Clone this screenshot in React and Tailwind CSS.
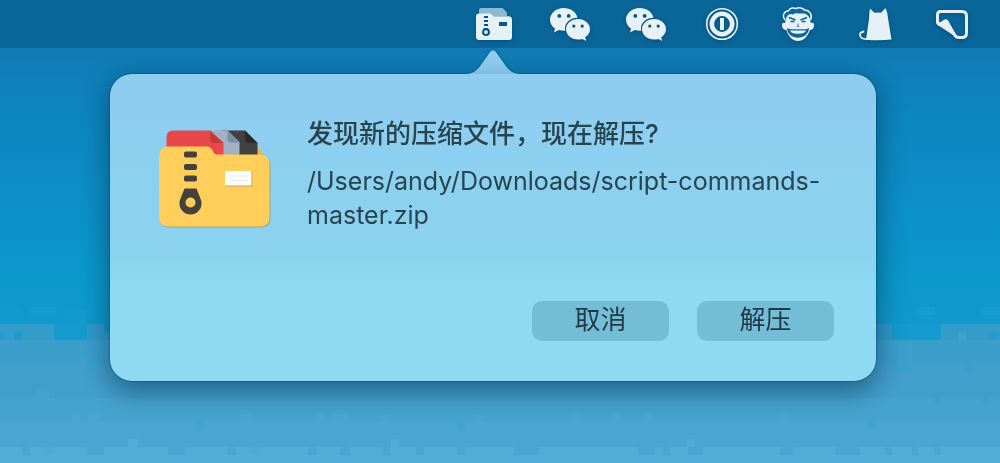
import React from "react";

// flat colour bands from the horizon down: y, height, colour
const BANDS = [
  [340, 25, "#3b9fcc"],
  [365, 33, "#429fcb"],
  [398, 24, "#46a3cd"],
  [422, 25, "#4aa6d1"],
  [447, 16, "#53acd5"],
];

const BLOCKS = [
  // horizon, left of the popover
  [0, 307, 20, 17, "#119acd"],
  [30, 307, 26, 8, "#159bce"],
  [64, 310, 22, 14, "#149bce"],
  [0, 324, 54, 16, "#349ccb"],
  [14, 332, 8, 8, "#1f9acd"],
  [0, 332, 5, 8, "#249bcc"],
  [54, 324, 33, 16, "#159bcf"],
  [87, 324, 17, 16, "#2f9bcb"],
  [104, 332, 8, 8, "#2f9bcb"],
  // horizon, right of the popover
  [876, 324, 16, 16, "#2f9bcb"],
  [892, 324, 49, 16, "#159bcf"],
  [941, 324, 59, 16, "#349ccb"],
  [958, 332, 8, 8, "#3fa1cf"],
  [990, 332, 8, 8, "#239bcc"],
  [917, 307, 18, 8, "#189cd0"],
  [982, 307, 18, 8, "#189cd0"],
  // uneven edges between the bands
  [892, 365, 20, 8, "#3b9fcc"],
  [965, 365, 9, 8, "#3b9fcc"],
  [80, 357, 8, 16, "#429fcb"],
  [934, 390, 7, 16, "#429fcb"],
  [983, 390, 6, 14, "#429fcb"],
  [37, 390, 12, 8, "#46a3cd"],
  [72, 414, 8, 8, "#4aa6d1"],
  [88, 414, 10, 8, "#4aa6d1"],
  [240, 414, 10, 8, "#4aa6d1"],
  [318, 414, 8, 8, "#4aa6d1"],
  [334, 414, 16, 8, "#4aa6d1"],
  [383, 414, 8, 8, "#4aa6d1"],
  [473, 414, 8, 8, "#4aa6d1"],
  [572, 414, 8, 8, "#4aa6d1"],
  [614, 414, 8, 8, "#4aa6d1"],
  [646, 414, 8, 8, "#4aa6d1"],
  [780, 414, 8, 8, "#4aa6d1"],
  [195, 422, 8, 8, "#46a3cd"],
  [457, 422, 8, 8, "#46a3cd"],
  [868, 422, 8, 8, "#46a3cd"],
  [128, 439, 10, 8, "#53acd5"],
  [391, 439, 8, 8, "#53acd5"],
  [687, 439, 8, 8, "#53acd5"],
  // gaps in the lowest band
  [22, 447, 8, 8, "#4aa6d1"],
  [46, 447, 8, 8, "#4ea9d3"],
  [87, 447, 17, 8, "#4aa6d1"],
  [168, 447, 17, 8, "#4aa6d1"],
  [227, 447, 9, 8, "#4aa6d1"],
  [250, 447, 8, 8, "#4ea9d3"],
  [308, 447, 9, 8, "#4aa6d1"],
  [340, 447, 10, 8, "#4aa6d1"],
  [383, 447, 7, 8, "#4aa6d1"],
  [416, 447, 8, 8, "#4aa6d1"],
  [457, 447, 8, 8, "#4aa6d1"],
  [514, 447, 25, 8, "#4aa6d1"],
  [638, 447, 17, 8, "#4aa6d1"],
  [663, 447, 7, 8, "#4aa6d1"],
  [688, 447, 15, 8, "#4aa6d1"],
  [780, 447, 13, 8, "#4aa6d1"],
  [835, 447, 25, 8, "#4aa6d1"],
  [885, 447, 7, 8, "#4aa6d1"],
  [912, 447, 6, 8, "#4aa6d1"],
  [934, 447, 7, 8, "#4aa6d1"],
];

function Wallpaper() {
  return (
    <svg
      className="absolute inset-0 -z-10 h-full w-full"
      viewBox="0 0 1000 463"
      preserveAspectRatio="none"
      shapeRendering="crispEdges"
      aria-hidden="true"
    >
      <defs>
        <linearGradient id="sky" x1="0" y1="0" x2="0" y2="1">
          <stop offset="0" stopColor="#1176b2" />
          <stop offset="0.15" stopColor="#107bb5" />
          <stop offset="0.35" stopColor="#0d86bf" />
          <stop offset="0.6" stopColor="#0c90c8" />
          <stop offset="0.8" stopColor="#0a98cb" />
          <stop offset="1" stopColor="#129acd" />
        </linearGradient>
      </defs>
      <rect width="1000" height="341" fill="url(#sky)" />
      {BANDS.map(([y, h, fill]) => (
        <rect key={y} y={y} width="1000" height={h} fill={fill} />
      ))}
      {BLOCKS.map(([x, y, w, h, fill]) => (
        <rect key={`${x}-${y}`} x={x} y={y} width={w} height={h} fill={fill} />
      ))}
    </svg>
  );
}

function ArchiveGlyph() {
  return (
    <svg viewBox="0 0 40 40" className="h-10 w-10" fill="#e6f1f6">
      <path d="M5 10V6q0-2 2-2h21.500l4.500 4.500V12H5z" fill="#8bb9d2" />
      <path
        fillRule="evenodd"
        d="M5 9.500h10.500q1.800 0 2.500 1.500.6 1.300 2 1.300h14.500q3.500 0 3.500 3.500V33q0 3-3 3H5q-3 0-3-3V12.500q0-3 3-3zM10 12v2h4v-2zM10 16v2h4v-2zM10 20v2h4v-2zM10 24q-2 2-2 4a4 4 0 0 0 8 0q0-2-2-4zM12 26.200a1.900 1.900 0 1 1 0 3.800 1.900 1.900 0 0 1 0-3.800zM25 18v4h8v-4z"
      />
    </svg>
  );
}

function WeChatGlyph() {
  return (
    <svg viewBox="0 0 40 40" className="h-10 w-10" fill="#e6f1f6">
      <path
        fillRule="evenodd"
        d="M13.500 4C6 4 0 9.200 0 15.700c0 3.700 2 6.800 5 8.900L4 28.500l4.900-2.500c1.900.6 4 .9 6.400.7A11.300 11.300 0 0 1 15 24.600c0-6 5.600-10.800 12.500-10.800C26.500 8.200 20.600 4 13.500 4zM9.300 10a1.900 1.900 0 1 1 0 3.800 1.900 1.900 0 0 1 0-3.800zm9.400 0a1.900 1.900 0 1 1 0 3.800 1.900 1.900 0 0 1 0-3.800z"
      />
      <path
        fillRule="evenodd"
        d="M28 15c-6.800 0-12 4.500-12 10.200s5.200 10.300 12 10.300c1.500 0 2.900-.2 4.200-.6L36.200 37l-1-3.700c3-1.900 4.800-4.800 4.800-8.100C40 19.500 34.800 15 28 15zm-4.200 5.500a1.600 1.600 0 1 1 0 3.200 1.600 1.600 0 0 1 0-3.200zm8.400 0a1.600 1.600 0 1 1 0 3.200 1.600 1.600 0 0 1 0-3.200z"
      />
    </svg>
  );
}

function KeyholeGlyph() {
  return (
    <svg viewBox="0 0 40 40" className="h-10 w-10" fill="none" stroke="#e6f1f6">
      <circle cx="20" cy="20" r="15.300" strokeWidth="1.600" />
      <circle cx="20" cy="20" r="10.200" strokeWidth="4.600" />
      <path d="M20 14v12" strokeWidth="4" />
    </svg>
  );
}

function FaceGlyph() {
  return (
    <svg viewBox="0 0 40 40" className="h-10 w-10">
      <path
        d="M7 16C3.500 11 6.500 7 10.500 6.800 12 3.500 16 3.500 18 4.500c3-1.500 7-.5 8.500 1.500 5 0 8.500 5 6 10"
        fill="#0a689c"
        stroke="#e6f1f6"
        strokeWidth="1.500"
      />
      <path
        d="M7.500 16C9 10.500 12 9 15 10.500 18 8 22 10 24 9.500c4-.5 7 2 8 6l.8 3.500q3.500-1 3.200 2.500c-.3 3.500-2 4.500-4 4.500-2.200 6.500-6.500 11-12 11S10.400 32.500 8.300 26c-2 0-4-1-4.300-4.500Q3.600 18 7 19z"
        fill="#e6f1f6"
      />
      <g fill="none" stroke="#0a689c">
        <path d="M11 13.500l6.500 2.500M29 13.500L22.500 16" strokeWidth="1.800" />
        <path d="M12.500 17.500h4M23.500 17.500h4" strokeWidth="1.600" />
        <path d="M20 19.500V22M18.800 22.500h2.400" strokeWidth="0.800" />
      </g>
      <path d="M9 24q2 1.200 4 1.200h14q2 0 4-1.200c-.3 6-5 9.800-11 9.800S9.300 30 9 24z" fill="#0a689c" />
      <path d="M12 26.500h16q-1 3.200-8 3.200t-8-3.200z" fill="#e6f1f6" />
    </svg>
  );
}

function CatGlyph() {
  return (
    <svg viewBox="0 0 40 40" className="h-10 w-10">
      <path
        d="M16 4.500l4.500 4.200q3.500-.5 6.500 0L31.500 4q2 4 2.500 10L37.500 35.500q-12 1.500-25.500.3l3-20.800q0-6.500 1-10.500z"
        fill="#e6f1f6"
      />
      <path
        d="M14 35Q6.500 35.500 6 31q-.2-3 4.300-3.500"
        fill="none"
        stroke="#e6f1f6"
        strokeWidth="1.800"
      />
    </svg>
  );
}

function PanelGlyph() {
  return (
    <svg viewBox="0 0 40 40" className="h-10 w-10">
      <path
        d="M9.500 7.500h22.500q4.500 0 4.500 4.500v17q0 4.500-4.500 4.500h-3.500q-2 0-3.500-2L18.500 21 15 17.500l-4 3Q7.500 20.500 7.500 17v-6q0-3.500 3-3.500z"
        fill="none"
        stroke="#e6f1f6"
        strokeWidth="3"
        strokeLinejoin="round"
      />
      <path d="M6 17q0 4 4 5.500L27.500 34 18.500 17q-1.500-2.500-4-1.500L9 19z" fill="#e6f1f6" />
    </svg>
  );
}

function FolderIcon() {
  return (
    <svg viewBox="0 0 114 100" className="w-[114px] shrink-0" aria-hidden="true">
      <path d="M96 17.500q7 2 8.500 10H96z" fill="#f0b44e" />
      <path d="M62 1.500h24L98.500 14v16H62z" fill="#414141" />
      <path d="M86 1.500L98.500 14H90q-4 0-4-4z" fill="#2b2b2b" />
      <path d="M46 1.500h22.500L80.500 13v18H46z" fill="#a3b1c2" />
      <path d="M68.500 1.500L80.500 13.500H72q-3.500 0-3.500-3.500z" fill="#7790a8" />
      <path d="M14 1.500h37L64.500 14v20H7.500V8.500q0-7 6.500-7z" fill="#e84849" />
      <path d="M51 1.500L64.500 14H55q-4 0-4-4z" fill="#c23b3c" />
      <path
        d="M8 18h38c5 0 7 2 8 5 .8 2 2 3 4 3h43q9 1 9.500 9v54q0 9-9.500 9H9q-9 0-9-9V27q0-8 8-9z"
        transform="translate(1 .5)"
        fill="#a99a5c"
        opacity="0.700"
      />
      <path
        d="M8 17.500h38c5 0 7 2 8 5 .8 2 2 3 4 3h43q9.500 1 9.500 9V88q0 9.500-9.500 9.500H9.500Q0 97.500 0 88V27q0-8 8-9.500z"
        fill="#ffce5b"
      />
      <g fill="#44423b">
        <rect x="25" y="22.500" width="13" height="6" rx="2" />
        <rect x="25" y="35" width="13" height="6" rx="2" />
        <rect x="25" y="46.500" width="13" height="6" rx="2" />
        <path
          fillRule="evenodd"
          d="M25.500 59.500h12l3.500 9q2 4 1.500 6a11 11 0 0 1-22 0q-.5-2 1.500-6zM31.500 68.500a5 5 0 1 0 0 10 5 5 0 0 0 0-10z"
        />
      </g>
      <rect x="66.500" y="42.500" width="27" height="15" rx="1" fill="#c9a452" />
      <rect x="66" y="42" width="26.500" height="14.500" rx="1" fill="#fff" />
      <path d="M70 47h19M70 51.500h19" stroke="#e9ebf0" />
    </svg>
  );
}

const MENU_ITEMS = [
  { id: "archive", label: "压缩", Glyph: ArchiveGlyph },
  { id: "wechat-1", label: "微信", Glyph: WeChatGlyph },
  { id: "wechat-2", label: "微信", Glyph: WeChatGlyph },
  { id: "keyhole", label: "密码", Glyph: KeyholeGlyph },
  { id: "face", label: "头像", Glyph: FaceGlyph },
  { id: "cat", label: "猫", Glyph: CatGlyph },
  { id: "panel", label: "面板", Glyph: PanelGlyph },
];

function MenuBar() {
  return (
    <header className="flex h-12 items-center justify-end bg-[#0a6699] pr-3">
      {MENU_ITEMS.map(({ id, label, Glyph }) => (
        <button
          key={id}
          aria-label={label}
          className="flex w-[76px] justify-center drop-shadow-[0_1px_2px_rgba(0,40,70,0.4)]"
        >
          <Glyph />
        </button>
      ))}
    </header>
  );
}

function Popover() {
  return (
    <section className="flex flex-col items-center drop-shadow-[0_0_1px_rgba(0,40,60,0.7)]">
      <svg viewBox="0 0 60 27" className="-mb-px h-[27px] w-[60px]" aria-hidden="true">
        <path
          d="M0 27v-.8c9 0 13-3 17-8L27 4q3-3.600 6 0L43 18.200c4 5 8 8 17 8v.8z"
          fill="#8fcdf0"
        />
      </svg>
      <div className="w-full rounded-[22px] bg-linear-to-b from-[#8fcdf0] from-10% via-[#8ad3ef] via-60% to-[#8edaf2] to-68% pt-10 pr-[42px] pb-10 pl-[49px] shadow-[0_8px_28px_rgba(0,40,70,0.36)]">
        <div className="flex items-start gap-[34px]">
          <div className="pt-[15px]">
            <FolderIcon />
          </div>
          <div className="min-w-0 flex-1 text-[#27444f]">
            <h1 className="text-[26px] leading-10 font-medium">
              {"发现新的压缩文件\uff0c现在解压?"}
            </h1>
            <p className="mt-[10px] text-[25px] leading-[34px]">
              /Users/andy/Downloads/script-commands-master.zip
            </p>
          </div>
        </div>
        <div className="mt-[69px] flex justify-end gap-7">
          <button className="h-10 w-[137px] rounded-[10px] bg-[#74bdd7] pb-0.5 text-[26px] leading-[38px] text-[#1f3a45]">
            取消
          </button>
          <button className="h-10 w-[137px] rounded-[10px] bg-[#74bdd7] pb-0.5 text-[26px] leading-[38px] text-[#1f3a45]">
            解压
          </button>
        </div>
      </div>
    </section>
  );
}

export default function App() {
  return (
    <div
      lang="zh-CN"
      className="relative isolate min-h-screen overflow-hidden font-['Inter','Noto_Sans_CJK_SC',sans-serif]"
    >
      <Wallpaper />
      <MenuBar />
      <main className="pr-[124px] pl-[110px]">
        <Popover />
      </main>
    </div>
  );
}
